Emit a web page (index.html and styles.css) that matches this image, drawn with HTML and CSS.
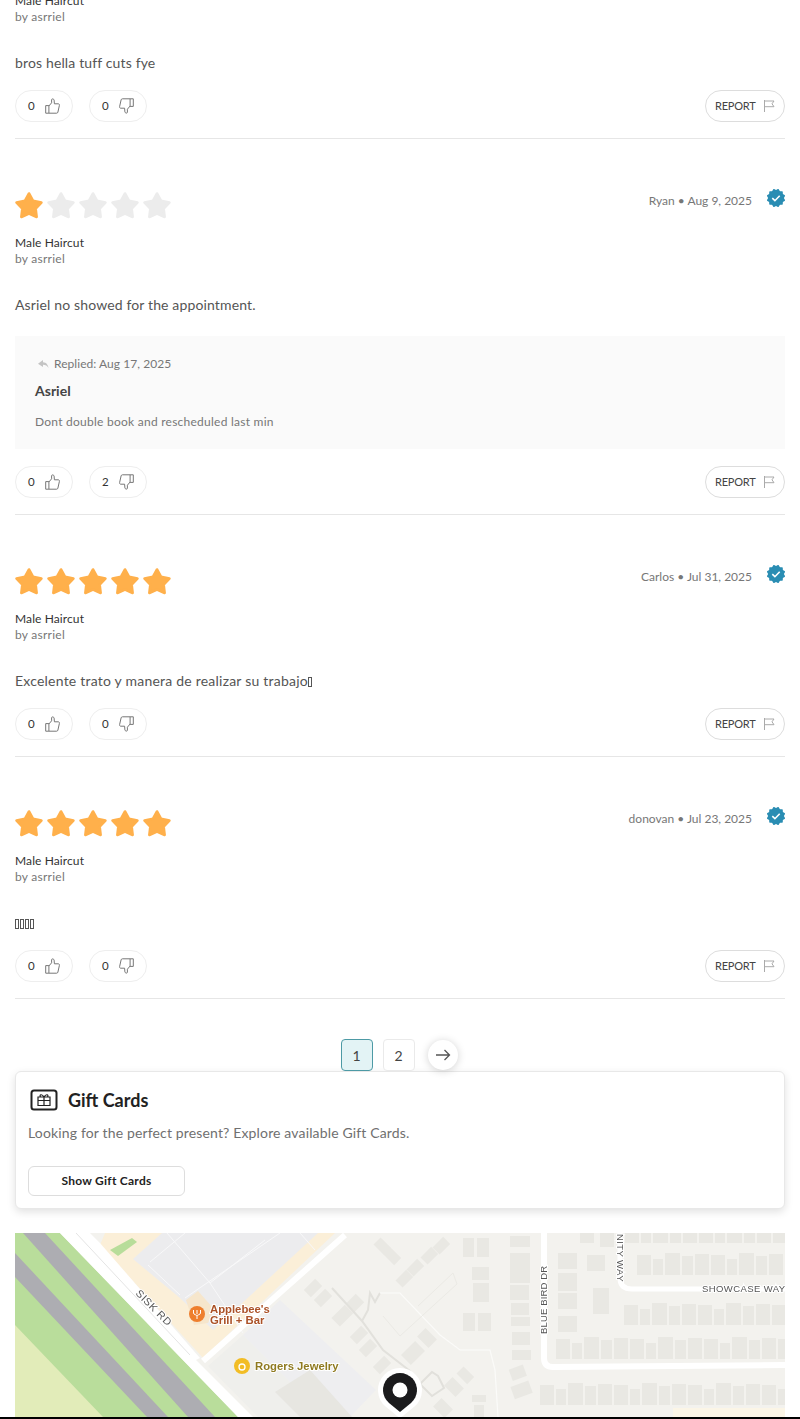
FILE: index.html
```html
<!DOCTYPE html>
<html lang="en">
<head>
    <meta charset="UTF-8">
    <meta name="viewport" content="width=device-width, initial-scale=1.0">
    <title>Reviews</title>
    <link rel="stylesheet" href="styles.css">
</head>
<body>
    <svg class="defs" width="0" height="0">
        <symbol id="star" viewBox="0 0 28 28">
            <path d="M14 2.500L18.100 9.800 26.400 11.500 20.660 17.660 21.640 26 14 22.500 6.360 26 7.340 17.660 1.600 11.500 9.900 9.800z" fill="currentColor" stroke="currentColor" stroke-width="2.600" stroke-linejoin="round"/>
        </symbol>
        <symbol id="thumb" viewBox="0 0 15 16">
            <path d="M.7 7.600h3.200v7.600H.7z M3.900 8l2.700-3.200V1.800c0-1.300 2.200-1.200 2.500.3l.3 3.700h3.800c1 0 1.400.8 1.200 1.600l-1.500 6.700c-.2.7-.6 1.100-1.300 1.100H3.900" fill="none" stroke="#777" stroke-width="1"/>
        </symbol>
        <symbol id="flag" viewBox="0 0 12 12">
            <path d="M1.500 0v12 M1.500 1h9.500l-2 2.800 2 2.900H1.500" fill="none" stroke="#aaa" stroke-width="1"/>
        </symbol>
        <symbol id="badge" viewBox="0 0 18 18">
            <g fill="#2a8db3">
                <rect x="2.200" y="2.200" width="13.600" height="13.600" rx=".8"/>
                <rect x="2.200" y="2.200" width="13.600" height="13.600" rx=".8" transform="rotate(30 9 9)"/>
                <rect x="2.200" y="2.200" width="13.600" height="13.600" rx=".8" transform="rotate(60 9 9)"/>
            </g>
            <path d="M5.300 9.200l2.600 2.500 4.800-5" fill="none" stroke="#fff" stroke-width="1.600"/>
        </symbol>
    </svg>

    <div class="page">
        <div class="review">
            <div class="review-head"></div>
            <div class="service">Male Haircut</div>
            <div class="by">by asrriel</div>
            <p class="text">bros hella tuff cuts fye</p>
            <div class="actions">
                <button class="vote">0 <svg class="thumb"><use href="#thumb"/></svg></button>
                <button class="vote">0 <svg class="thumb down"><use href="#thumb"/></svg></button>
                <button class="report">REPORT <svg class="flag"><use href="#flag"/></svg></button>
            </div>
        </div>

        <div class="review">
            <div class="review-head">
                <div class="stars">
                    <svg class="star on"><use href="#star"/></svg>
                    <svg class="star"><use href="#star"/></svg>
                    <svg class="star"><use href="#star"/></svg>
                    <svg class="star"><use href="#star"/></svg>
                    <svg class="star"><use href="#star"/></svg>
                </div>
                <div class="meta"><span class="who">Ryan • Aug 9, 2025</span><svg class="badge"><use href="#badge"/></svg></div>
            </div>
            <div class="service">Male Haircut</div>
            <div class="by">by asrriel</div>
            <p class="text">Asriel no showed for the appointment.</p>
            <div class="reply">
                <div class="reply-date">
                    <svg class="reply-icon" viewBox="0 0 11 9"><path d="M5 0L0 3.800 5 7V4.800c2.500 0 4.300.7 5.500 3.200C10 5 8.500 2.500 5 2.300z" fill="#c4c4c4"/></svg>
                    Replied: Aug 17, 2025
                </div>
                <div class="reply-name">Asriel</div>
                <div class="reply-text">Dont double book and rescheduled last min</div>
            </div>
            <div class="actions">
                <button class="vote">0 <svg class="thumb"><use href="#thumb"/></svg></button>
                <button class="vote">2 <svg class="thumb down"><use href="#thumb"/></svg></button>
                <button class="report">REPORT <svg class="flag"><use href="#flag"/></svg></button>
            </div>
        </div>

        <div class="review">
            <div class="review-head">
                <div class="stars">
                    <svg class="star on"><use href="#star"/></svg>
                    <svg class="star on"><use href="#star"/></svg>
                    <svg class="star on"><use href="#star"/></svg>
                    <svg class="star on"><use href="#star"/></svg>
                    <svg class="star on"><use href="#star"/></svg>
                </div>
                <div class="meta"><span class="who">Carlos • Jul 31, 2025</span><svg class="badge"><use href="#badge"/></svg></div>
            </div>
            <div class="service">Male Haircut</div>
            <div class="by">by asrriel</div>
            <p class="text wide">Excelente trato y manera de realizar su trabajo<span class="tofu"></span></p>
            <div class="actions">
                <button class="vote">0 <svg class="thumb"><use href="#thumb"/></svg></button>
                <button class="vote">0 <svg class="thumb down"><use href="#thumb"/></svg></button>
                <button class="report">REPORT <svg class="flag"><use href="#flag"/></svg></button>
            </div>
        </div>

        <div class="review">
            <div class="review-head">
                <div class="stars">
                    <svg class="star on"><use href="#star"/></svg>
                    <svg class="star on"><use href="#star"/></svg>
                    <svg class="star on"><use href="#star"/></svg>
                    <svg class="star on"><use href="#star"/></svg>
                    <svg class="star on"><use href="#star"/></svg>
                </div>
                <div class="meta"><span class="who">donovan • Jul 23, 2025</span><svg class="badge"><use href="#badge"/></svg></div>
            </div>
            <div class="service">Male Haircut</div>
            <div class="by">by asrriel</div>
            <p class="text"><span class="tofu"></span><span class="tofu"></span><span class="tofu"></span><span class="tofu"></span></p>
            <div class="actions">
                <button class="vote">0 <svg class="thumb"><use href="#thumb"/></svg></button>
                <button class="vote">0 <svg class="thumb down"><use href="#thumb"/></svg></button>
                <button class="report">REPORT <svg class="flag"><use href="#flag"/></svg></button>
            </div>
        </div>

        <div class="pagination">
            <button class="page-btn active">1</button>
            <button class="page-btn">2</button>
            <button class="page-next">
                <svg width="16" height="12" viewBox="0 0 16 12"><path d="M1 6h13.500M9.500 1l5 5-5 5" fill="none" stroke="#555" stroke-width="1.300"/></svg>
            </button>
        </div>

        <div class="gift-card">
            <div class="gift-head">
                <svg class="gift-icon" viewBox="0 0 28 22">
                    <rect x="1.500" y="1.500" width="25" height="19" rx="2.500" fill="none" stroke="#222" stroke-width="2"/>
                    <path d="M8 8h12v8.500H8z M8 11.500h12 M14 8v8.500 M14 8c-2-3.500-5-2.500-3.500 0 M14 8c2-3.500 5-2.500 3.500 0" fill="none" stroke="#222" stroke-width="1.200"/>
                </svg>
                <h3>Gift Cards</h3>
            </div>
            <p class="gift-text">Looking for the perfect present? Explore available Gift Cards.</p>
            <button class="gift-btn">Show Gift Cards</button>
        </div>

        <svg class="map" viewBox="15 1233 770 184">
            <defs>
                <pattern id="houses" width="74" height="24" patternUnits="userSpaceOnUse">
                    <g fill="#e9e8e3">
                        <rect x="0" y="2" width="14" height="20"/>
                        <rect x="16" y="6" width="10" height="16"/>
                        <rect x="28" y="0" width="15" height="22"/>
                        <rect x="45" y="3" width="11" height="19"/>
                        <rect x="58" y="1" width="14" height="21"/>
                    </g>
                </pattern>
            </defs>
            <rect x="15" y="1233" width="770" height="184" fill="#f3f2ee"/>
            <!-- lots east of the road -->
            <path d="M208 1366L243 1335 325 1417H258z" fill="#efefec"/>
            <path d="M243 1335L280 1300 376 1390 350 1417H325z" fill="#eeeef0"/>
            <path d="M275 1392L310 1370 352 1417H300z" fill="#e7e6e1"/>
            <!-- restaurant lot -->
            <path d="M105 1233H335L203 1358 100 1245z" fill="#fbefd8"/>
            <path d="M133 1259L162 1233H318L213 1330 180 1298z" fill="#ececee"/>
            <path d="M110 1250L132 1238 137 1242 118 1256z" fill="#b8dd9a"/>
            <path d="M167 1233L210 1283 243 1333M148 1265L180 1295M150 1262L185 1233M185 1298L280 1233M210 1283L265 1240M300 1233L315 1250" stroke="#f8f8f9" stroke-width="1" fill="none"/>
            <path d="M186 1300l12-9 16 18-6 14-14 2z" fill="#f6e6cc"/>
            <path d="M345 1235L203 1361" stroke="#fff" stroke-width="6" fill="none"/>
            <!-- green strip along the freeway -->
            <path d="M15 1233H60L238 1417H15z" fill="#b9dd9b"/>
            <path d="M15 1325L103 1417H15z" fill="#e2ecb9"/>
            <path d="M23 1233H45L215 1417H188z" fill="#adadb2"/>
            <path d="M15 1253L168 1417H147L15 1277z" fill="#adadb2"/>
            <path d="M60 1233H90L100 1243 200 1358 196 1360 253 1417H238z" fill="#fff"/>
            <path d="M76 1233L190 1355" stroke="#e4e4e4" stroke-width="1" fill="none"/>
            <!-- houses -->
            <g fill="#e9e8e3">
                <rect x="463" y="1238" width="11" height="19"/><rect x="477" y="1238" width="12" height="19"/>
                <rect x="472" y="1267" width="17" height="13"/><rect x="473" y="1283" width="16" height="19"/>
                <rect x="463" y="1313" width="12" height="18"/><rect x="478" y="1313" width="13" height="18"/>
                <rect x="510" y="1236" width="20" height="11"/><rect x="510" y="1253" width="20" height="30"/>
                <rect x="510" y="1285" width="19" height="15"/><rect x="511" y="1303" width="18" height="12"/>
                <rect x="511" y="1317" width="19" height="9"/><rect x="512" y="1332" width="18" height="13"/>
                <rect x="512" y="1350" width="19" height="10"/>
                <rect x="510" y="1367" width="15" height="12" transform="rotate(-20 517 1372)"/>
                <rect x="512" y="1384" width="19" height="13" transform="rotate(-20 520 1390)"/>
                <rect x="472" y="1395" width="14" height="7"/><rect x="474" y="1405" width="10" height="12"/>
                <rect x="558" y="1253" width="19" height="16"/><rect x="558" y="1273" width="19" height="18"/>
                <rect x="558" y="1293" width="19" height="16"/><rect x="558" y="1316" width="19" height="16"/>
                <rect x="587" y="1255" width="18" height="16"/><rect x="593" y="1288" width="16" height="26"/>
                <rect x="580" y="1233" width="14" height="10"/><rect x="600" y="1233" width="14" height="14"/>
            </g>
            <rect transform="translate(625 1221)" width="160" height="22" fill="url(#houses)"/>
            <rect transform="translate(637 1253)" width="148" height="22" fill="url(#houses)"/>
            <rect transform="translate(624 1303)" width="161" height="22" fill="url(#houses)"/>
            <rect transform="translate(556 1337)" width="229" height="22" fill="url(#houses)"/>
            <rect transform="translate(540 1383)" width="245" height="22" fill="url(#houses)"/>
            <g fill="#e9e8e3">
                <rect x="375" y="1241" width="15" height="10" transform="rotate(45 382 1246)"/>
                <rect x="385" y="1251" width="15" height="10" transform="rotate(45 392 1256)"/>
                <rect x="397" y="1274" width="15" height="10" transform="rotate(-45 404 1279)"/>
                <rect x="408" y="1263" width="15" height="10" transform="rotate(-45 415 1268)"/>
                <rect x="422" y="1251" width="15" height="10" transform="rotate(-45 429 1256)"/>
                <rect x="434" y="1241" width="15" height="10" transform="rotate(-45 441 1246)"/>
                <rect x="305" y="1283" width="16" height="10" transform="rotate(-45 313 1288)"/>
                <rect x="315" y="1293" width="16" height="10" transform="rotate(-45 323 1298)"/>
                <rect x="333" y="1310" width="19" height="12" transform="rotate(-45 342 1316)"/>
                <rect x="348" y="1297" width="14" height="12" transform="rotate(-45 355 1303)"/>
                <rect x="351" y="1330" width="16" height="10" transform="rotate(-45 359 1335)"/>
                <rect x="360" y="1343" width="16" height="10" transform="rotate(-45 368 1348)"/>
                <rect x="374" y="1360" width="16" height="10" transform="rotate(-45 382 1365)"/>
                <rect x="403" y="1346" width="20" height="14" transform="rotate(-45 413 1353)"/>
                <rect x="419" y="1332" width="16" height="12" transform="rotate(45 427 1338)"/>
                <rect x="446" y="1381" width="16" height="12" transform="rotate(45 454 1387)"/>
                <rect x="458" y="1370" width="15" height="10" transform="rotate(45 465 1375)"/>
                <rect x="435" y="1402" width="16" height="12" transform="rotate(45 443 1408)"/>
            </g>
            <path d="M332 1288L362 1321 383 1350 410 1371M362 1321L368 1310 370 1293 375 1302 380 1293" stroke="#e2e1dc" stroke-width="2" fill="none"/>
            <path d="M380 1293h20l40 42 20 15h30l5 20 3 47" stroke="#fbfbf9" stroke-width="1.200" fill="none"/>
            <path d="M383 1316l17 20 57-52-4-11-35 33" stroke="#ebeae5" stroke-width="1" fill="none"/>
            <path d="M432 1372l-12 12 12 12 12-8-6-12z" stroke="#e1e0db" stroke-width="2" fill="none"/>
            <rect x="673" y="1408" width="112" height="9" fill="#fbf5e6"/>
            <!-- roads -->
            <path d="M544 1233V1358q0 9 9 9L785 1365" stroke="#fff" stroke-width="6" fill="none"/>
            <path d="M620 1233V1278q0 11 12 11H785" stroke="#fff" stroke-width="5" fill="none"/>
            <!-- labels -->
            <g class="map-road">
                <text class="sisk" transform="translate(135 1294) rotate(45)">SISK RD</text>
                <text class="blue" transform="translate(547 1334) rotate(-90)">BLUE BIRD DR</text>
                <text transform="translate(617 1234) rotate(90)">NITY WAY</text>
                <text x="702" y="1292">SHOWCASE WAY</text>
            </g>
            <circle cx="197" cy="1314" r="8" fill="#ee7f2e"/>
            <path d="M193.500 1310v3c0 2 3.500 1.500 3.500 3v3M197 1310v4M200.500 1310v3c0 2-3.500 1.500-3.500 3" stroke="#fff" stroke-width="1" fill="none"/>
            <text class="map-poi apple" x="210" y="1313">Applebee's</text>
            <text class="map-poi apple" x="210" y="1324">Grill + Bar</text>
            <circle cx="242" cy="1366" r="8" fill="#f2bd25"/>
            <circle cx="242" cy="1367" r="3" fill="none" stroke="#fff" stroke-width="1.300"/>
            <text class="map-poi rogers" x="255" y="1370">Rogers Jewelry</text>
            <!-- pin -->
            <path class="pin" d="M400 1412L389 1403A17 17 0 1 1 411 1403z"/>
            <circle cx="400" cy="1390" r="7.500" fill="#fff"/>
        </svg>
    </div>
    <div class="bottom-bar"></div>
</body>
</html>
```

FILE: styles.css
```css
*{
    box-sizing:border-box;
}
html,body{
    height:1419px;
    overflow:hidden;
}
body{
    margin:0;
    background:#fff;
    font-family:"Lato", sans-serif;
    color:#444;
}
button{
    font-family:inherit;
    background:#fff;
    cursor:pointer;
}
.defs{
    position:absolute;
}
.page{
    margin-top:-103px;
    padding:0 15px;
}

/* reviews */
.review{
    padding:51px 0 16px;
    border-bottom:1px solid #e6e6e6;
}
.review-head{
    display:flex;
    justify-content:space-between;
    height:30px;
    margin-bottom:15px;
}
.stars{
    display:flex;
    gap:4px;
}
.star{
    width:28px;
    height:30px;
    color:#ececec;
}
.star.on{
    color:#ffb04b;
}
.meta{
    display:flex;
    align-items:flex-start;
    gap:15px;
    height:18px;
}
.who{
    font-size:12px;
    line-height:22px;
    color:#777;
}
.badge{
    width:18px;
    height:18px;
    margin-top:-1px;
}
.service{
    font-size:12px;
    line-height:16px;
    letter-spacing:.1px;
    color:#333;
}
.by{
    font-size:12px;
    line-height:16px;
    letter-spacing:.25px;
    color:#777;
}
.text{
    height:20px;
    margin:28px 0 0;
    font-size:14px;
    line-height:20px;
    letter-spacing:.14px;
    color:#555;
}
.text.wide{
    letter-spacing:.22px;
}
/* the emoji show up as empty boxes in the screenshot */
.tofu{
    display:inline-block;
    width:4px;
    height:10px;
    margin-right:1px;
    border:1px solid #555;
    vertical-align:-1px;
}
.actions{
    display:flex;
    gap:16px;
    margin-top:17px;
}
.vote{
    display:flex;
    align-items:center;
    justify-content:space-between;
    width:58px;
    height:32px;
    padding:0 12px 2px;
    border:1px solid #eee;
    border-radius:16px;
    font-size:11.500px;
    color:#333;
}
.thumb{
    width:15px;
    height:16px;
    margin-top:2px;
}
.thumb.down{
    transform:rotate(180deg);
}
.report{
    display:flex;
    align-items:center;
    justify-content:space-between;
    width:80px;
    height:32px;
    margin-left:auto;
    padding:0 9px 2px;
    border:1px solid #ddd;
    border-radius:16px;
    font-size:11px;
    letter-spacing:-.2px;
    color:#444;
}
.flag{
    width:12px;
    height:12px;
    margin-top:2px;
}

/* owner reply */
.reply{
    margin-top:21px;
    padding:20px 20px 19px;
    background:#fafafa;
}
.reply-date{
    display:flex;
    align-items:center;
    gap:5px;
    padding-left:3px;
    font-size:12px;
    line-height:16px;
    letter-spacing:.05px;
    color:#777;
}
.reply-icon{
    width:11px;
    height:9px;
}
.reply-name{
    margin-top:9px;
    font-size:14px;
    line-height:20px;
    font-weight:bold;
    color:#444;
}
.reply-text{
    margin-top:13px;
    font-size:12px;
    line-height:16px;
    letter-spacing:.25px;
    color:#777;
}

/* pagination */
.pagination{
    display:flex;
    justify-content:center;
    align-items:center;
    margin-top:40px;
    padding-right:2px;
}
.page-btn{
    width:32px;
    height:32px;
    margin-right:10px;
    border:1px solid #eaeaea;
    border-radius:4px;
    font-size:14px;
    color:#444;
}
.page-btn.active{
    background:#e3f3f5;
    border-color:#4d9aa5;
}
.page-next{
    display:flex;
    align-items:center;
    justify-content:center;
    width:30px;
    height:30px;
    margin-left:3px;
    padding:0;
    border:none;
    border-radius:50%;
    box-shadow:0 1px 8px rgba(0,0,0,.18);
}

/* gift card */
.gift-card{
    padding:17px 12px 12px;
    border:1px solid #e8e8e8;
    border-radius:6px;
    box-shadow:0 3px 8px rgba(0,0,0,.12);
    background:#fff;
}
.gift-head{
    display:flex;
    align-items:center;
    gap:10px;
    height:22px;
    padding-left:2px;
}
.gift-icon{
    width:28px;
    height:22px;
}
.gift-head h3{
    margin:0;
    font-size:18px;
    color:#222;
}
.gift-text{
    margin:12px 0 0;
    font-size:14px;
    line-height:20px;
    letter-spacing:.15px;
    color:#707070;
}
.gift-btn{
    display:block;
    width:157px;
    height:30px;
    margin-top:23px;
    padding-bottom:2px;
    border:1px solid #ddd;
    border-radius:6px;
    font-size:12px;
    font-weight:bold;
    letter-spacing:.25px;
    color:#222;
}

/* map */
.map{
    display:block;
    width:770px;
    height:184px;
    margin-top:24px;
    filter:blur(.4px);
}
.map-road text{
    font-family:"Liberation Sans", sans-serif;
    font-size:9.500px;
    letter-spacing:.4px;
    fill:#555;
    stroke:#fff;
    stroke-width:2px;
    paint-order:stroke;
}
.map-road .sisk{
    font-size:10.500px;
    letter-spacing:.6px;
}
.map-road .blue{
    letter-spacing:.15px;
}
.map-poi{
    font-family:"Liberation Sans", sans-serif;
    font-size:11.300px;
    font-weight:bold;
    stroke:#fff;
    stroke-width:2px;
    paint-order:stroke;
}
.map-poi.apple{
    fill:#ab5228;
}
.map-poi.rogers{
    fill:#8f7a20;
}
.pin{
    fill:#1b1b1d;
    stroke:#fff;
    stroke-width:10px;
    stroke-linejoin:round;
    paint-order:stroke;
}
.bottom-bar{
    height:2px;
    background:#000;
}
```
